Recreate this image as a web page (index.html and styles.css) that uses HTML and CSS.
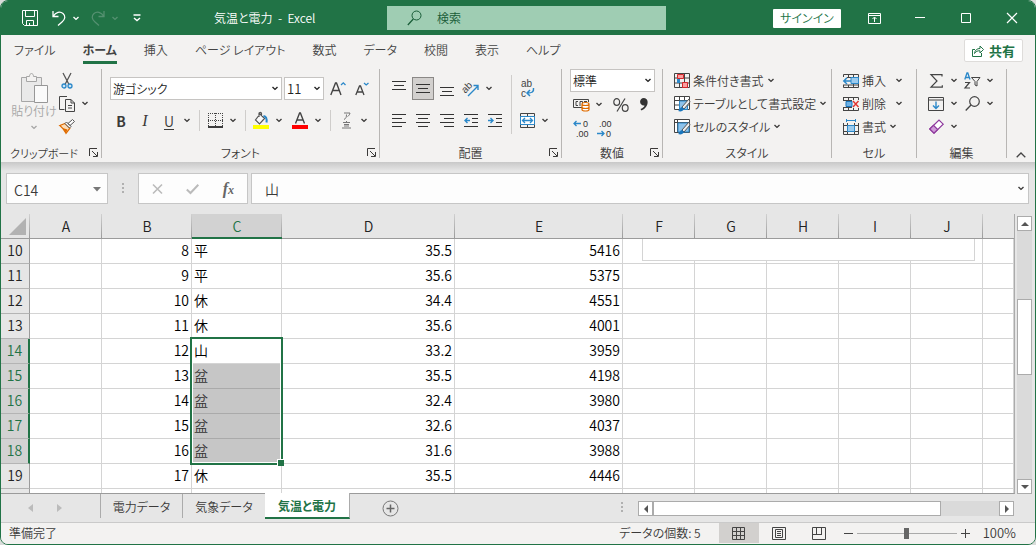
FILE: index.html
```html
<!DOCTYPE html>
<html lang="ja">
<head>
<meta charset="utf-8">
<title>気温と電力 - Excel</title>
<link rel="stylesheet" href="styles.css">
</head>
<body>
<svg class="defs" aria-hidden="true">
  <symbol id="chev" viewBox="0 0 8 5"><path d="M1.500 1L4 3.400 6.500 1" fill="none" stroke="currentColor" stroke-width="1.400"/></symbol>
  <symbol id="launch" viewBox="0 0 9 9"><path d="M.5 8V.5H8M3 3l5 5M8.500 4v4.500H4" fill="none" stroke="currentColor"/></symbol>
</svg>
<div class="app">
  <header class="titlebar">
    <div class="quick">
      <button class="tb" aria-label="保存"><svg width="16" height="16" viewBox="0 0 16 16"><path d="M.5.5h15v15H2.500l-2-2zM3.500.5v6h9v-6M4.500 15.500v-5h7v5M7.500 15v-2" fill="none" stroke="#fff"/></svg></button>
      <button class="tb undo" aria-label="元に戻す"><svg width="14" height="16" viewBox="0 0 14 16"><path d="M1 1v5.500h5.500M1 6.500C4 2 8 1 11 3.500s2 6-1 8.500l-4 3.500" fill="none" stroke="#fff" stroke-width="1.300"/></svg><svg class="chev" ><use href="#chev"/></svg></button>
      <button class="tb redo" aria-label="やり直し"><svg width="14" height="16" viewBox="0 0 14 16"><path d="M13 1v5.500H7.500M13 6.500C10 2 6 1 3 3.500s-2 6 1 8.500l4 3.500" fill="none" stroke="currentColor" stroke-width="1.300"/></svg><svg class="chev"><use href="#chev"/></svg></button>
      <button class="tb" aria-label="カスタマイズ"><svg width="8" height="8" viewBox="0 0 8 8"><path d="M.5 1h7M1 4l3 2.500L7 4" fill="none" stroke="#fff" stroke-width="1.400"/></svg></button>
    </div>
    <div class="doc">気温と電力&nbsp; -&nbsp; Excel</div>
    <label class="search"><svg width="15" height="16" viewBox="0 0 15 16"><circle cx="9.500" cy="5.500" r="4.500" fill="none" stroke="#185c37"/><path d="M6.300 9L.8 15" stroke="#185c37" stroke-width="1.200"/></svg><input type="text" placeholder="検索" aria-label="検索"></label>
    <div class="wincontrols">
      <button class="signin">サインイン</button>
      <button class="tb" aria-label="リボンの表示オプション"><svg width="13" height="11" viewBox="0 0 13 11"><path d="M.5.5h12v10H.5zM.5 2.500h12M6.500 9V4.500M4.500 6l2-2 2 2" fill="none" stroke="#fff"/></svg></button>
      <button class="tb" aria-label="最小化"><svg width="10" height="10" viewBox="0 0 10 10"><path d="M0 4.500h10" stroke="#fff"/></svg></button>
      <button class="tb" aria-label="最大化"><svg width="10" height="10" viewBox="0 0 10 10"><path d="M.5.5h9v9h-9z" fill="none" stroke="#fff"/></svg></button>
      <button class="tb" aria-label="閉じる"><svg width="10" height="10" viewBox="0 0 10 10"><path d="M0 0l10 10M10 0L0 10" stroke="#fff" stroke-width="1.200"/></svg></button>
    </div>
  </header>

  <nav class="tabs">
    <a href="#">ファイル</a><a href="#" class="on">ホーム</a><a href="#">挿入</a><a href="#">ページ レイアウト</a><a href="#">数式</a><a href="#">データ</a><a href="#">校閲</a><a href="#">表示</a><a href="#">ヘルプ</a>
    <button class="share"><svg width="12" height="12" viewBox="0 0 12 12"><path d="M3 4.500H.5v7h9V8M2.500 8.500C3 5 5 3.500 8 3.500V1l3.500 3.500L8 8V5.800C5.500 5.500 4 6.500 2.500 8.500z" fill="none" stroke="#217346"/></svg>共有</button>
  </nav>

  <section class="ribbon">
    <div class="group clip">
      <div class="body">
        <button class="paste"><svg width="27" height="30" viewBox="0 0 27 30"><path d="M.5 4.500h20v24H.5z" fill="#e9e9e9" stroke="#a6a6a6"/><path d="M5.500 8.500v-5h3c0-4 4-4 4 0h3v5z" fill="#f3f2f1" stroke="#a6a6a6"/><path d="M13.500 12.500h13v17h-13z" fill="#fafafa" stroke="#979797"/></svg>貼り付け<svg class="chev"><use href="#chev"/></svg></button>
        <div class="stack small">
          <button class="ib" aria-label="切り取り"><svg width="12" height="16" viewBox="0 0 12 16"><path d="M2 0l6 11.500M10 0L4 11.500" stroke="#555" stroke-width="1.300"/><circle cx="3" cy="13" r="2" fill="#cfe6f5" stroke="#2b88c9" stroke-width="1.300"/><circle cx="9" cy="13" r="2" fill="#cfe6f5" stroke="#2b88c9" stroke-width="1.300"/></svg></button>
          <div class="row"><button class="ib" aria-label="コピー"><svg width="16" height="16" viewBox="0 0 16 16"><path d="M8 .5H.5v13h5M6.500 3.500h5.500l3.500 3.500v8.500h-9zM12 3.500V7h3.500M9 9.500h4M9 12h4" fill="none" stroke="#444"/></svg></button><button class="cb" aria-label="コピーのオプション"><svg class="chev"><use href="#chev"/></svg></button></div>
          <button class="ib" aria-label="書式のコピー"><svg width="16" height="15" viewBox="0 0 16 15"><path d="M.8 6.500L6 4.500l4.800 4.800L7 14.300C5.500 11.500 3.500 8.500.8 6.500z" fill="#fbdcb8" stroke="#e06c00" stroke-width="1.300"/><path d="M3.500 9l5 1.500L7 14z" fill="#e06c00"/><path d="M6 4.500L7.500 3 12 7.500l-1.500 1.500zM9 4.500l4.500-4 2 2L11 6.500z" fill="#fff" stroke="#555"/></svg></button>
        </div>
      </div>
      <div class="cap"><span>クリップボード</span><button class="launch" aria-label="クリップボードの詳細"><svg width="9" height="9"><use href="#launch"/></svg></button></div>
    </div>

    <div class="group font">
      <div class="body stack">
        <div class="row fonts">
          <span class="sel fname"><select aria-label="フォント名"><option>游ゴシック</option></select><svg class="chev"><use href="#chev"/></svg></span>
          <span class="sel fsize"><select aria-label="フォント サイズ"><option>11</option></select><svg class="chev"><use href="#chev"/></svg></span>
          <button class="ib" aria-label="拡大"><svg width="16" height="16" viewBox="0 0 16 16"><path d="M.8 14L5.500 2h1L11 14M2.500 9.500h7" fill="none" stroke="#444" stroke-width="1.400"/><path d="M11 4l2.300-2.200L15.500 4" fill="none" stroke="#2b88c9" stroke-width="1.300"/></svg></button>
          <button class="ib" aria-label="縮小"><svg width="14" height="16" viewBox="0 0 14 16"><path d="M.8 14L4.500 5h1L9 14M2.200 11h5.600" fill="none" stroke="#444" stroke-width="1.300"/><path d="M9 2l2.200 2L13.500 2" fill="none" stroke="#2b88c9" stroke-width="1.300"/></svg></button>
        </div>
        <div class="row">
          <button class="ib b">B</button><button class="ib i">I</button><button class="ib u">U</button><button class="cb" aria-label="下線のオプション"><svg class="chev"><use href="#chev"/></svg></button>
          <i class="sep"></i>
          <button class="ib" aria-label="罫線"><svg width="15" height="15" viewBox="0 0 15 15"><path d="M.5 0v13M7.500 0v13M14.500 0v13M0 .5h15M0 7.500h15" fill="none" stroke="#444" stroke-dasharray="1 1"/><path d="M0 14h15" stroke="#000" stroke-width="1.600"/></svg></button><button class="cb" aria-label="罫線のオプション"><svg class="chev"><use href="#chev"/></svg></button>
          <i class="sep"></i>
          <button class="ib" aria-label="塗りつぶしの色"><svg width="16" height="17" viewBox="0 0 16 17"><path d="M7 2L2.500 8l4 4 5-5.500zM6 5V1.500c0-1.500 2.500-1.500 2.500 0V4" fill="#fafafa" stroke="#555" stroke-width="1.200"/><path d="M10.500 4c3 .5 3.500 3 3 6.500" fill="none" stroke="#2b88c9" stroke-width="2"/><path d="M0 13h16v4H0z" fill="#ff0"/></svg></button><button class="cb" aria-label="塗りつぶしのオプション"><svg class="chev"><use href="#chev"/></svg></button>
          <button class="ib fc" aria-label="フォントの色"><svg width="16" height="17" viewBox="0 0 16 17"><path d="M3.500 11.500L7.600 1h.8l4.100 10.500M5 8h6" fill="none" stroke="#444" stroke-width="1.400"/><path d="M0 13h16v4H0z" fill="red"/></svg></button><button class="cb" aria-label="フォントの色のオプション"><svg class="chev"><use href="#chev"/></svg></button>
          <i class="sep"></i>
          <button class="ib" aria-label="ふりがな"><svg width="9" height="17" viewBox="0 0 9 17"><path d="M2 1h6C7.500 3 7 3.500 5.500 4.500M4.500 2.500C4.500 5 4 6.500 2 7.500M1 10.500h7M4.500 9v2M2 12.500h5M2 14h5M0 16h9" fill="none" stroke="#777"/></svg></button><button class="cb" aria-label="ふりがなのオプション"><svg class="chev"><use href="#chev"/></svg></button>
        </div>
      </div>
      <div class="cap"><span>フォント</span><button class="launch" aria-label="フォントの詳細"><svg width="9" height="9"><use href="#launch"/></svg></button></div>
    </div>

    <div class="group align">
      <div class="body">
        <div class="stack">
          <div class="row">
            <button class="ib" aria-label="上揃え"><svg width="14" height="15" viewBox="0 0 14 15"><path d="M0 .5h14M2 4.500h10M0 8.500h14" stroke="#333" /></svg></button>
            <button class="ib on" aria-label="上下中央揃え"><svg width="14" height="15" viewBox="0 0 14 15"><path d="M0 3.500h14M2 7.500h10M0 11.500h14" stroke="#333"/></svg></button>
            <button class="ib" aria-label="下揃え"><svg width="14" height="15" viewBox="0 0 14 15"><path d="M0 6.500h14M2 10.500h10M0 14.500h14" stroke="#333"/></svg></button>
            <button class="ib" aria-label="方向"><svg width="18" height="17" viewBox="0 0 18 17"><text x="0" y="10" transform="rotate(-45 6 8)" class="glyph">ab</text><path d="M6 16L16 6M11.500 5.500H16V10" fill="none" stroke="#2b88c9" stroke-width="1.400"/></svg></button><button class="cb" aria-label="方向のオプション"><svg class="chev"><use href="#chev"/></svg></button>
          </div>
          <div class="row">
            <button class="ib" aria-label="左揃え"><svg width="14" height="13" viewBox="0 0 14 13"><path d="M0 .5h14M0 4.500h10M0 8.500h14M0 12.500h10" stroke="#333"/></svg></button>
            <button class="ib" aria-label="中央揃え"><svg width="14" height="13" viewBox="0 0 14 13"><path d="M0 .5h14M2 4.500h10M0 8.500h14M2 12.500h10" stroke="#333"/></svg></button>
            <button class="ib" aria-label="右揃え"><svg width="14" height="13" viewBox="0 0 14 13"><path d="M0 .5h14M4 4.500h10M0 8.500h14M4 12.500h10" stroke="#333"/></svg></button>
            <button class="ib" aria-label="インデントを減らす"><svg width="14" height="13" viewBox="0 0 14 13"><path d="M0 .5h14M8 4.500h6M8 8.500h6M0 12.500h14" stroke="#333"/><path d="M6 6.500H1M3.500 4L1 6.500 3.500 9" fill="none" stroke="#2b88c9" stroke-width="1.400"/></svg></button>
            <button class="ib" aria-label="インデントを増やす"><svg width="14" height="13" viewBox="0 0 14 13"><path d="M0 .5h14M8 4.500h6M8 8.500h6M0 12.500h14" stroke="#333"/><path d="M0 6.500h5M2.500 4L5 6.500 2.500 9" fill="none" stroke="#2b88c9" stroke-width="1.400"/></svg></button>
          </div>
        </div>
        <i class="sep tall"></i>
        <div class="stack">
          <div class="row"><button class="ib" aria-label="折り返して全体を表示する"><svg width="15" height="18" viewBox="0 0 15 18"><text x="1" y="7" class="glyph">ab</text><text x="1" y="17" class="glyph">c</text><path d="M13.500 8c.5 4-1.500 5-6 5M10 10l-3 3 3 3" fill="none" stroke="#2b88c9" stroke-width="1.500"/></svg></button></div>
          <div class="row"><button class="ib" aria-label="セルを結合して中央揃え"><svg width="15" height="15" viewBox="0 0 15 15"><path d="M.5.5h14v14H.5zM7.500 0v4M7.500 11v4" fill="none" stroke="#444"/><path d="M.5 3.500h14v8H.5z" fill="#fff" stroke="#2b88c9"/><path d="M2.500 7.500h10M5 5L2.500 7.500 5 10M10 5l2.500 2.500L10 10" fill="none" stroke="#2b88c9" stroke-width="1.300"/></svg></button><button class="cb" aria-label="結合のオプション"><svg class="chev"><use href="#chev"/></svg></button></div>
        </div>
      </div>
      <div class="cap"><span>配置</span><button class="launch" aria-label="配置の詳細"><svg width="9" height="9"><use href="#launch"/></svg></button></div>
    </div>

    <div class="group num">
      <div class="body stack">
        <span class="sel fmt"><select aria-label="表示形式"><option>標準</option></select><svg class="chev"><use href="#chev"/></svg></span>
        <div class="row">
          <button class="ib" aria-label="通貨表示形式"><svg width="17" height="14" viewBox="0 0 17 14"><path d="M9 9.500H.5v-8h15V4" fill="none" stroke="#444"/><path d="M5 3.500H3v4h2M7 8V3.500h2.500V6M12.500 3.500v1M11 3.500h3" fill="none" stroke="#444"/><path d="M9 6c0-2 7-2 7 0v5.500c0 2-7 2-7 0zM9 6c0 2 7 2 7 0M9 9c0 2 7 2 7 0" fill="#fff" stroke="#e06c00" stroke-width="1.200"/></svg></button><button class="cb" aria-label="通貨のオプション"><svg class="chev"><use href="#chev"/></svg></button>
          <button class="ib pct" aria-label="パーセント"><svg width="16" height="14" viewBox="0 0 16 14"><path d="M12 .5L4 13.500" stroke="#444" stroke-width="1.200"/><ellipse cx="3.700" cy="4" rx="2.900" ry="3.300" fill="none" stroke="#444" stroke-width="1.200"/><ellipse cx="12.200" cy="10" rx="2.900" ry="3.300" fill="none" stroke="#444" stroke-width="1.200"/></svg></button>
          <button class="ib" aria-label="桁区切り"><svg width="8" height="13" viewBox="0 0 8 13"><path d="M4 0C9 0 9.500 9 1.500 12.500L.5 11C3 10 4.500 8.800 4.500 7.500-1 8-1.500 0 4 0z" fill="#333"/></svg></button>
        </div>
        <div class="row">
          <button class="ib" aria-label="小数点以下の表示桁数を増やす"><svg width="17" height="17" viewBox="0 0 17 17"><text x="10" y="7" class="digit">0</text><text x="3" y="17" class="digit">.00</text><path d="M8 3.500H1M3.500 1L1 3.500 3.500 6" fill="none" stroke="#2b88c9" stroke-width="1.300"/></svg></button>
          <button class="ib" aria-label="小数点以下の表示桁数を減らす"><svg width="17" height="17" viewBox="0 0 17 17"><text x="3" y="7" class="digit">.00</text><text x="10" y="17" class="digit">0</text><path d="M1 13.500h7M5.500 11L8 13.500 5.500 16" fill="none" stroke="#2b88c9" stroke-width="1.300"/></svg></button>
        </div>
      </div>
      <div class="cap"><span>数値</span><button class="launch" aria-label="数値の詳細"><svg width="9" height="9"><use href="#launch"/></svg></button></div>
    </div>

    <div class="group style">
      <div class="body stack small">
        <button class="tbn"><svg width="16" height="16" viewBox="0 0 16 16"><path d="M.5.5h15v14H.5zM0 5h16M0 10h16M5.500 0v15M10.500 0v15" fill="none" stroke="#444"/><path d="M3.500 1.500h6v4h-6zM8.500 9.500h5v5h-5z" fill="#f9a0a0" stroke="#d6262b"/><path d="M3 6h3v4H3z" fill="#2b88c9"/></svg><span>条件付き書式</span><svg class="chev"><use href="#chev"/></svg></button>
        <button class="tbn"><svg width="16" height="16" viewBox="0 0 16 16"><path d="M.5.5h15v13H.5zM0 4.500h16M0 9h16M5.500 0v14M10.500 0v14" fill="#fff" stroke="#444"/><path d="M5.500 5h8v8.500h-8z" fill="#8ec2ea" stroke="#2b88c9"/><path d="M15 3L8 11l2 2 6-7z" fill="#eee" stroke="#555"/><path d="M8 11c-2 0-2 3-4 4 3 1 5 0 6-2z" fill="#1976bd"/></svg><span>テーブルとして書式設定</span><svg class="chev"><use href="#chev"/></svg></button>
        <button class="tbn"><svg width="16" height="16" viewBox="0 0 16 16"><path d="M.5.5h15v13H.5zM0 3.500h16M3.500 0v14" fill="#fff" stroke="#444"/><path d="M4 4h11v9H4z" fill="#8ec2ea" stroke="#2b88c9"/><path d="M15 3L8 11l2 2 6-7z" fill="#eee" stroke="#555"/><path d="M8 11c-2 0-2 3-4 4 3 1 5 0 6-2z" fill="#1976bd"/></svg><span>セルのスタイル</span><svg class="chev"><use href="#chev"/></svg></button>
      </div>
      <div class="cap"><span>スタイル</span></div>
    </div>

    <div class="group cell">
      <div class="body stack small">
        <button class="tbn wide"><svg width="16" height="14" viewBox="0 0 16 14"><path d="M.5 3V.5h15v13H.5V11M5.500 0v3M10.500 0v14M5.500 11v3M0 11h16M4 3.500h12" fill="none" stroke="#444"/><path d="M8 3.500h7.500v6H8z" fill="#9ccbee" stroke="#2b88c9"/><path d="M8 7H1M4 3.800L.8 7 4 10" fill="none" stroke="#2b88c9" stroke-width="1.500"/></svg><span>挿入</span><svg class="chev"><use href="#chev"/></svg></button>
        <button class="tbn wide"><svg width="16" height="14" viewBox="0 0 16 14"><path d="M0 .5h15.500V3M.5 13.500h15V11M5.500 0v3M10.500 0v3M5.500 11v3M10.500 11v3M0 3.500h9M0 10.500h9M.5 0v3M.5 11v3" fill="none" stroke="#444"/><path d="M3 4.500h6v5H3z" fill="#6fb1e4" stroke="#1976bd"/><path d="M10 4l5.500 6M15.500 4L10 10" stroke="#e0342f" stroke-width="1.400"/></svg><span>削除</span><svg class="chev"><use href="#chev"/></svg></button>
        <button class="tbn"><svg width="16" height="16" viewBox="0 0 16 16"><path d="M.5 4v11.500h15V4M0 6.500h16M0 12.500h16M4.500 4v12M11.500 4v12" fill="none" stroke="#444"/><path d="M4.500 6.500h7v6h-7z" fill="#9ccbee" stroke="#2b88c9"/><path d="M3.500 1.500h9M3.500 0v3M12.500 0v3" stroke="#2b88c9"/></svg><span>書式</span><svg class="chev"><use href="#chev"/></svg></button>
      </div>
      <div class="cap"><span>セル</span></div>
    </div>

    <div class="group edit">
      <div class="body stack small">
        <div class="row">
          <button class="ib" aria-label="合計"><svg width="13" height="14" viewBox="0 0 13 14"><path d="M12 2.500V.7H1l6 6.300-6 6.200h11.300v-2" fill="none" stroke="#444" stroke-width="1.200"/></svg></button><button class="cb" aria-label="合計のオプション"><svg class="chev"><use href="#chev"/></svg></button>
          <button class="ib" aria-label="並べ替えとフィルター"><svg width="17" height="17" viewBox="0 0 17 17"><path d="M.8 7.500L3 1h.8L6 7.500M1.500 5.500h4" fill="none" stroke="#2b88c9" stroke-width="1.300"/><path d="M1 10.500h4.500L1 16h5" fill="none" stroke="#444" stroke-width="1.200"/><path d="M7.500 5.500h8.500l-3 4V14l-2-1V9.500z" fill="none" stroke="#444"/></svg></button><button class="cb" aria-label="並べ替えのオプション"><svg class="chev"><use href="#chev"/></svg></button>
        </div>
        <div class="row">
          <button class="ib" aria-label="フィル"><svg width="16" height="14" viewBox="0 0 16 14"><path d="M.5.5h15v13H.5zM0 3h16" fill="none" stroke="#444"/><path d="M8 4.500v7M5 8.500l3 3 3-3" fill="none" stroke="#2b88c9" stroke-width="1.400"/></svg></button><button class="cb" aria-label="フィルのオプション"><svg class="chev"><use href="#chev"/></svg></button>
          <button class="ib" aria-label="検索と選択"><svg width="15" height="15" viewBox="0 0 15 15"><circle cx="9.500" cy="5.500" r="4.800" fill="none" stroke="#444" stroke-width="1.200"/><path d="M6 9L.7 14.500" stroke="#444" stroke-width="1.300"/></svg></button><button class="cb" aria-label="検索のオプション"><svg class="chev"><use href="#chev"/></svg></button>
        </div>
        <div class="row">
          <button class="ib" aria-label="クリア"><svg width="15" height="15" viewBox="0 0 15 15"><path d="M.8 10L10 1l4.200 4.200-9.200 9z" fill="#fff" stroke="#8e3a9d" stroke-width="1.200"/><path d="M.8 10l3.700-3.700 4.200 4.200L5 14.200z" fill="#cf9bd8" stroke="#8e3a9d" stroke-width="1.200"/></svg></button><button class="cb" aria-label="クリアのオプション"><svg class="chev"><use href="#chev"/></svg></button>
        </div>
      </div>
      <div class="cap"><span>編集</span></div>
    </div>
    <button class="collapse" aria-label="リボンを折りたたむ"><svg width="10" height="6" viewBox="0 0 10 6"><path d="M.7 5.300L5 1l4.300 4.300" fill="none" stroke="#444" stroke-width="1.300"/></svg></button>
  </section>

  <section class="formula">
    <div class="namebox"><input type="text" value="C14" aria-label="名前ボックス"><svg width="8" height="5" viewBox="0 0 8 5"><path d="M0 0h8L4 4.500z" fill="#777"/></svg></div>
    <i class="dots"></i>
    <div class="fbtns">
      <button aria-label="キャンセル"><svg width="11" height="10" viewBox="0 0 11 10"><path d="M1 .5l9 9M10 .5l-9 9" stroke="#bbb" stroke-width="1.600"/></svg></button>
      <button aria-label="入力"><svg width="13" height="10" viewBox="0 0 13 10"><path d="M.8 5.500l3.700 3.500L12.300.8" fill="none" stroke="#bbb" stroke-width="2"/></svg></button>
      <button class="fx" aria-label="関数の挿入">f<small>x</small></button>
    </div>
    <div class="finput"><input type="text" value="山" aria-label="数式バー"><svg class="chev"><use href="#chev"/></svg></div>
  </section>

  <main class="work">
    <div class="sheet">
      <table>
        <colgroup><col class="c-h"><col class="c-s"><col class="c-m"><col class="c-m"><col class="c-d"><col class="c-e"><col class="c-s"><col class="c-s"><col class="c-s"><col class="c-s"><col class="c-s"><col></colgroup>
        <thead><tr><th class="corner"><svg width="17" height="17" viewBox="0 0 17 17"><path d="M17 0v17H0z" fill="#b2b2b2"/></svg></th><th>A</th><th>B</th><th class="on">C</th><th>D</th><th>E</th><th>F</th><th>G</th><th>H</th><th>I</th><th>J</th><th class="last"></th></tr></thead>
        <tbody>
          <tr><th>10</th><td></td><td>8</td><td class="k">平</td><td>35.5</td><td>5416</td><td></td><td></td><td></td><td></td><td></td><td></td></tr>
          <tr><th>11</th><td></td><td>9</td><td class="k">平</td><td>35.6</td><td>5375</td><td></td><td></td><td></td><td></td><td></td><td></td></tr>
          <tr><th>12</th><td></td><td>10</td><td class="k">休</td><td>34.4</td><td>4551</td><td></td><td></td><td></td><td></td><td></td><td></td></tr>
          <tr><th>13</th><td></td><td>11</td><td class="k">休</td><td>35.6</td><td>4001</td><td></td><td></td><td></td><td></td><td></td><td></td></tr>
          <tr class="s"><th>14</th><td></td><td>12</td><td class="k anchor">山<i class="selbox"></i></td><td>33.2</td><td>3959</td><td></td><td></td><td></td><td></td><td></td><td></td></tr>
          <tr class="s"><th>15</th><td></td><td>13</td><td class="k g">盆</td><td>35.5</td><td>4198</td><td></td><td></td><td></td><td></td><td></td><td></td></tr>
          <tr class="s"><th>16</th><td></td><td>14</td><td class="k g">盆</td><td>32.4</td><td>3980</td><td></td><td></td><td></td><td></td><td></td><td></td></tr>
          <tr class="s"><th>17</th><td></td><td>15</td><td class="k g">盆</td><td>32.6</td><td>4037</td><td></td><td></td><td></td><td></td><td></td><td></td></tr>
          <tr class="s"><th>18</th><td></td><td>16</td><td class="k g">盆</td><td>31.6</td><td>3988</td><td></td><td></td><td></td><td></td><td></td><td></td></tr>
          <tr><th>19</th><td></td><td>17</td><td class="k">休</td><td>35.5</td><td>4446</td><td></td><td></td><td></td><td></td><td></td><td></td></tr>
          <tr><th></th><td></td><td></td><td></td><td></td><td></td><td></td><td></td><td></td><td></td><td></td><td></td></tr>
        </tbody>
      </table>
      <div class="chart"></div>
    </div>
    <div class="vscroll">
      <button aria-label="上へ"><svg width="8" height="4" viewBox="0 0 8 4"><path d="M0 4h8L4 0z" fill="#555"/></svg></button>
      <div class="track"><i class="thumb"></i></div>
      <button aria-label="下へ"><svg width="8" height="4" viewBox="0 0 8 4"><path d="M0 0h8L4 4z" fill="#555"/></svg></button>
    </div>
  </main>

  <footer class="sheets">
    <div class="navs"><button aria-label="前のシート"><svg width="5" height="8" viewBox="0 0 5 8"><path d="M5 0v8L0 4z" fill="#bbb"/></svg></button><button aria-label="次のシート"><svg width="5" height="8" viewBox="0 0 5 8"><path d="M0 0v8l5-4z" fill="#bbb"/></svg></button></div>
    <button class="stab">電力データ</button><button class="stab">気象データ</button><button class="stab on">気温と電力</button>
    <button class="add" aria-label="新しいシート"><svg width="17" height="17" viewBox="0 0 17 17"><circle cx="8.500" cy="8.500" r="7.500" fill="none" stroke="#777"/><path d="M8.500 4.500v8M4.500 8.500h8" stroke="#666" stroke-width="1.500"/></svg></button>
    <i class="dots"></i>
    <div class="hscroll">
      <button aria-label="左へ"><svg width="4" height="8" viewBox="0 0 4 8"><path d="M4 0v8L0 4z" fill="#555"/></svg></button>
      <div class="track"><i class="thumb"></i></div>
      <button aria-label="右へ"><svg width="4" height="8" viewBox="0 0 4 8"><path d="M0 0v8l4-4z" fill="#555"/></svg></button>
    </div>
  </footer>

  <footer class="status">
    <span class="ready">準備完了</span>
    <span class="count">データの個数: 5</span>
    <button class="view on" aria-label="標準"><svg width="13" height="13" viewBox="0 0 13 13"><path d="M.5.5h12v12H.5zM0 4.500h13M0 8.500h13M4.500 0v13M8.500 0v13" fill="none" stroke="#444"/></svg></button>
    <button class="view" aria-label="ページ レイアウト"><svg width="14" height="13" viewBox="0 0 14 13"><path d="M.5.5h13v12H.5zM3.500 2.500h7v8h-7zM5 4.500h4M5 6.500h4M5 8.500h4" fill="none" stroke="#444"/></svg></button>
    <button class="view" aria-label="改ページ プレビュー"><svg width="14" height="13" viewBox="0 0 14 13"><path d="M.5.5h13v12H.5zM4.500.5v7M9.500.5v7M1 7.500h9" fill="none" stroke="#444"/></svg></button>
    <button class="zoom" aria-label="縮小"><svg width="9" height="9" viewBox="0 0 9 9"><path d="M0 4.500h9" stroke="#444"/></svg></button>
    <input class="slider" type="range" min="0" max="100" value="50" aria-label="ズーム">
    <button class="zoom" aria-label="拡大"><svg width="9" height="9" viewBox="0 0 9 9"><path d="M0 4.500h9M4.500 0v9" stroke="#444"/></svg></button>
    <span class="pctval">100%</span>
  </footer>
</div>
</body>
</html>
```
FILE: styles.css
```css
* { box-sizing: border-box; }
body {
  margin: 0;
  background: #d9dcda;
  font: 350 12px/16px "Noto Sans CJK JP", "Noto Sans", sans-serif;
  font-feature-settings: "palt";
  color: #3b3a39;
}
button, input, select {
  font: inherit;
  font-feature-settings: inherit;
  color: inherit;
  background: none;
  border: 0;
  padding: 0;
  margin: 0;
  border-radius: 0;
}
input { min-width: 0; outline: 0; }
svg { display: block; flex: none; overflow: visible; }
.defs { position: absolute; width: 0; height: 0; }
.chev { width: 8px; height: 5px; }
.app {
  height: 100vh;
  min-height: 420px;
  display: flex;
  flex-direction: column;
  border: 1px solid #217346;
  border-radius: 8px;
  overflow: hidden;
  background: #e6e6e6;
}

/* title bar */
.titlebar { display: flex; align-items: center; height: 34px; flex: none; background: #217346; color: #fff; }
.tb { display: flex; align-items: center; justify-content: center; }
.quick { display: flex; align-items: center; width: 213px; padding-left: 21px; }
.quick .undo { margin-left: 14px; gap: 6px; }
.quick .redo { margin-left: 11px; margin-right: 14px; gap: 6px; color: #549070; }
.doc { width: 173px; }
.search { display: flex; align-items: center; flex: 0 1 279px; height: 24px; padding-left: 20px; gap: 15px; background: #9fcdb3; color: #185c37; }
.search input::placeholder { color: #185c37; opacity: 1; }
.wincontrols { display: flex; align-items: center; margin-left: auto; }
.signin { width: 68px; height: 19px; background: #fff; color: #217346; border-radius: 1px; margin-right: 10px; }
.wincontrols .tb { width: 46px; height: 32px; }

/* ribbon tabs */
.tabs { display: flex; align-items: center; gap: 27px; height: 31px; flex: none; padding: 0 12px 0 13px; background: #f3f2f1; }
.tabs a { color: #444; text-decoration: none; padding: 5px 0 3px; border-bottom: 3px solid transparent; white-space: nowrap; }
.tabs a.on { font-weight: bold; border-color: #217346; }
.share { display: flex; align-items: center; justify-content: center; gap: 5px; width: 59px; height: 23px; margin-left: auto; background: #fff; border: 1px solid #dedcda; border-radius: 2px; color: #217346; font-size: 13px; font-weight: bold; }

/* ribbon */
.ribbon { display: flex; flex: none; height: 96px; padding: 3px 0 4px; background: #f3f2f1; position: relative; }
.group { display: flex; flex-direction: column; flex: none; border-right: 1px solid #b8b6b4; }
.body { flex: 1; display: flex; align-items: flex-start; }
.stack { display: flex; flex-direction: column; align-items: flex-start; }
.row { display: flex; align-items: center; }
.cap { display: flex; align-items: center; justify-content: center; height: 10px; position: relative; }
.launch { position: absolute; right: 3px; top: 0; }
.ib { display: flex; align-items: center; justify-content: center; width: 24px; height: 23px; font-size: 14px; }
.cb { display: flex; align-items: center; justify-content: center; width: 12px; height: 23px; }
.sep { width: 1px; height: 21px; margin: 0 3px 0 6px; background: #cfcdcb; }
.sel { position: relative; display: flex; align-items: center; height: 23px; background: #fff; border: 1px solid #c6c4c2; color: #222; }
.sel select { appearance: none; flex: 1; height: 21px; padding: 0 16px 0 2px; outline: 0; }
.sel .chev { position: absolute; right: 2px; pointer-events: none; }
.clip { width: 101px; }
.clip .cap { padding-right: 14px; font-size: 11px; }
.paste { display: flex; flex-direction: column; align-items: center; width: 48px; margin: 4px 0 0 9px; color: #a6a6a6; }
.paste .chev { margin-top: 6px; }
.clip .small { margin-left: -3px; }
.small > * { height: 23px; }
.font { width: 278px; }
.font .stack { padding-left: 7px; }
.font .body { padding-top: 8px; gap: 9px; }
.fonts { padding-left: 1px; }
.fname { width: 172px; margin-right: 2px; }
.fsize { width: 40px; margin-right: 2px; }
.fsize select { font-size: 13px; }
.b { font-weight: bold; }
.i { font-family: "Liberation Serif", serif; font-style: italic; font-size: 16px; }
.u { text-decoration: underline; text-underline-offset: 2px; }
.fc { margin-left: 3px; }
.align { width: 182px; }
.align .body { padding: 8px 0 0 7px; }
.align .stack { gap: 9px; }
.align .tall { height: 59px; margin: -2px 3px 0 4px; }
.ib.on { width: 22px; margin: 0 1px; background: #d2d0ce; border: 1px solid #8a8886; }
.glyph { font: 10px "Liberation Sans", sans-serif; fill: #444; }
.digit { font: 9px "Liberation Sans", sans-serif; fill: #333; }
.num { width: 101px; }
.num .body { padding-left: 8px; gap: 1px; }
.num .ib { width: 23px; }
.num .pct { margin-left: 4px; }
.fmt { width: 85px; }
.style { width: 169px; }
.style .body { padding-left: 11px; }
.cell { width: 85px; }
.cell .body { padding-left: 11px; }
.edit { width: 90px; }
.edit .body { padding-left: 7px; }
.tbn { display: flex; align-items: center; gap: 3px; white-space: nowrap; }
.wide .chev { margin-left: 6px; }
.collapse { position: absolute; right: 9px; bottom: 4px; }

/* formula bar */
.formula { display: flex; flex: none; height: 52px; padding: 11px 6px 10px 5px; background: linear-gradient(#c8c8c8, #e6e6e6 9px); }
.namebox, .fbtns, .finput { display: flex; align-items: center; background: #fdfdfd; border: 1px solid #c6c6c6; }
.namebox { width: 102px; padding: 2px 6px 0 7px; font-size: 14px; }
.namebox input { flex: 1; width: 60px; }
.dots { width: 2px; height: 10px; background: repeating-linear-gradient(#b0b0b0 0 2px, transparent 2px 4px); }
.formula .dots { margin: 10px 14px 0; }
.fbtns { width: 110px; margin-right: 3px; justify-content: space-around; padding: 0 1px; }
.fbtns button { display: flex; width: 36px; justify-content: center; }
.fbtns .fx { align-items: baseline; font: italic bold 16px "Liberation Serif", serif; color: #666; }
.fx small { font-size: 12px; }
.finput { flex: 1; padding: 0 3px 0 13px; font-size: 14px; }
.finput input { flex: 1; }

/* sheet */
.work { display: flex; flex: 1; min-height: 0; }
.sheet { flex: 1; min-width: 0; position: relative; overflow: hidden; border-right: 1px solid #ababab; border-bottom: 1px solid #9b9b9b; }
table { width: 100%; table-layout: fixed; border-spacing: 0; background: #fff; font-size: 14px; line-height: 20px; color: #000; }
.c-h { width: 29px; }
.c-s { width: 72px; }
.c-m { width: 90px; }
.c-d { width: 173px; }
.c-e { width: 168px; }
th, td { height: 25px; padding: 0 2px 2px 0; border: 0 solid #d4d4d4; border-width: 0 1px 1px 0; text-align: right; white-space: nowrap; }
th { font-weight: 350; background: #e6e6e6; text-align: center; color: #222; }
thead th { padding: 0; border-right: 0; border-bottom-color: #9b9b9b; background: linear-gradient(#d0d0d0, #9b9b9b) right / 1px 100% no-repeat #e6e6e6; }
thead th.on { background-color: #d2d2d2; color: #217346; border-bottom: 2px solid #217346; }
thead th.last { background: #e6e6e6; }
.corner svg { margin: 1px 0 0 8px; }
tbody th { border-right-color: #9b9b9b; border-bottom-color: #b4b4b4; padding: 0 0 2px; }
.s th { background: #d2d2d2; color: #217346; border-right: 2px solid #217346; }
td.k { text-align: left; padding-left: 2px; }
td.g { background: #c6c6c6; border-bottom-color: #aaa; color: #333; }
td.anchor { position: relative; }
.selbox { position: absolute; z-index: 1; left: -2px; top: -2px; width: 93px; height: 128px; border: 2px solid #217346; box-shadow: inset 0 0 0 1px #fff; pointer-events: none; }
.selbox::after { content: ""; position: absolute; right: -3px; bottom: -3px; width: 6px; height: 6px; background: #217346; border: solid #fff; border-width: 1px 0 0 1px; }
.chart { position: absolute; left: 641px; top: 25px; width: 333px; height: 22px; background: #fff; border: 1px solid #d4d4d4; border-top: 0; }
.vscroll { display: flex; flex-direction: column; width: 15px; margin: 2px 3px 0 2px; }
.vscroll button, .hscroll button { display: flex; align-items: center; justify-content: center; width: 15px; height: 15px; background: #fff; border: 1px solid #ababab; }
.track { flex: 1; display: flex; background: #dadada; }
.thumb { background: #fff; border: 1px solid #ababab; }
.vscroll .track { flex-direction: column; padding-top: 68px; }
.vscroll .thumb { height: 76px; }

/* sheet tabs */
.sheets { display: flex; flex: none; height: 28px; }
.navs { display: flex; width: 100px; padding: 10px 0 0 27px; gap: 24px; align-items: flex-start; border-right: 1px solid #ababab; height: 24px; }
.stab { width: 82px; height: 24px; padding-top: 2px; border-right: 1px solid #ababab; }
.stab.on { width: 85px; height: 26px; margin-top: -1px; background: #fff; color: #217346; font-weight: bold; border-bottom: 2px solid #217346; z-index: 1; }
.stab:nth-of-type(2) { border-right: 0; }
.add { display: flex; align-items: flex-start; padding-top: 6px; margin-left: 32px; }
.sheets .dots { margin: 8px 15px 0 auto; }
.hscroll { display: flex; width: 376px; height: 15px; margin: 7px 21px 0 0; }
.hscroll .thumb { width: 288px; }

/* status bar */
.status { display: flex; flex: none; align-items: center; height: 22px; padding: 0 19px 1px 8px; background: #f3f2f1; border-top: 1px solid #cacaca; }
.count { margin-left: auto; margin-right: 18px; }
.view { display: flex; align-items: center; justify-content: center; width: 40px; height: 20px; }
.view.on { background: #d2d0ce; }
.zoom { width: 9px; }
.view + .zoom { margin-left: 5px; }
.slider { appearance: none; width: 100px; height: 11px; margin: 0 4px; background: linear-gradient(#aaa, #aaa) center / 100% 1px no-repeat; }
.slider::-webkit-slider-thumb { appearance: none; width: 5px; height: 11px; background: #666; }
.pctval { font-size: 13px; margin-left: 13px; }
```
